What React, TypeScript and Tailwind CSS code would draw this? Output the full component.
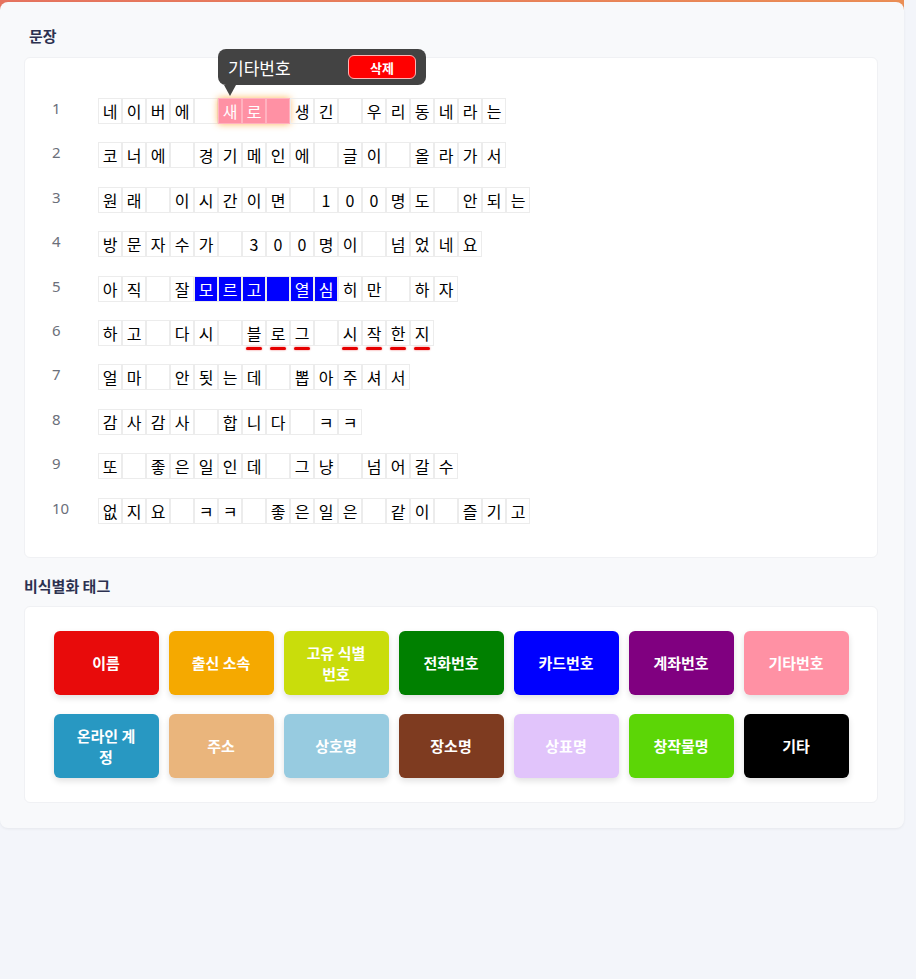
import type { ReactNode } from "react";

const FONT = { fontFamily: '"Noto Sans CJK KR", "Noto Sans", sans-serif' };

const SENTENCES = [
  "네이버에 새로 생긴 우리동네라는",
  "코너에 경기메인에 글이 올라가서",
  "원래 이시간이면 100명도 안되는",
  "방문자수가 300명이 넘었네요",
  "아직 잘모르고 열심히만 하자",
  "하고 다시 블로그 시작한지",
  "얼마 안됫는데 뽑아주셔서",
  "감사감사 합니다 ㅋㅋ",
  "또 좋은일인데 그냥 넘어갈수",
  "없지요 ㅋㅋ 좋은일은 같이 즐기고",
];

// row index -> char indexes with a mark
const BLUE: Record<number, number[]> = { 4: [4, 5, 6, 7, 8, 9] };
const UNDERLINE: Record<number, number[]> = { 5: [6, 7, 8, 10, 11, 12, 13] };

const TAGS: { label: string; bg: string }[] = [
  { label: "이름", bg: "bg-[#e80b0b]" },
  { label: "출신 소속", bg: "bg-[#f5a900]" },
  { label: "고유 식별 번호", bg: "bg-[#c9dd0b]" },
  { label: "전화번호", bg: "bg-[#008000]" },
  { label: "카드번호", bg: "bg-[#0000ff]" },
  { label: "계좌번호", bg: "bg-[#800080]" },
  { label: "기타번호", bg: "bg-[#ff91a4]" },
  { label: "온라인 계정", bg: "bg-[#2898c2]" },
  { label: "주소", bg: "bg-[#eab57c]" },
  { label: "상호명", bg: "bg-[#97cbe0]" },
  { label: "장소명", bg: "bg-[#7e3b20]" },
  { label: "상표명", bg: "bg-[#e1c4fb]" },
  { label: "창작물명", bg: "bg-[#5cd606]" },
  { label: "기타", bg: "bg-black" },
];

function Cell({ ch, className = "", underline = false }: { ch: string; className?: string; underline?: boolean }) {
  return (
    <span
      className={
        "relative flex h-[26px] w-[24px] items-center justify-center border border-[#ececec] text-[16px] leading-none " +
        className
      }
    >
      {ch === " " ? "" : ch}
      {underline && (
        <span className="absolute -bottom-[5px] left-[3px] right-[3px] h-[3px] rounded-full bg-[#e60000] shadow-[0_0_2px_rgba(230,0,0,0.6)]" />
      )}
    </span>
  );
}

function Tooltip() {
  return (
    <div className="absolute bottom-[calc(100%+13px)] left-0 z-10 flex h-[36px] w-[208px] items-center justify-between rounded-lg bg-[#434343] pl-[10px] pr-[10px]">
      <span className="text-[17px] leading-none text-white">기타번호</span>
      <button
        type="button"
        className="flex h-[24px] w-[68px] items-center justify-center rounded-md border border-[#ffb3b3] bg-[#ff0000] text-[13px] font-bold leading-none text-white"
      >
        삭제
      </button>
      <span className="absolute left-[6px] top-full h-0 w-0 border-l-[6px] border-r-[6px] border-t-[11px] border-l-transparent border-r-transparent border-t-[#434343]" />
    </div>
  );
}

function SentenceRow({ text, row }: { text: string; row: number }) {
  const chars = Array.from(text);
  const blue = BLUE[row] ?? [];
  const under = UNDERLINE[row] ?? [];

  let cells: ReactNode;
  if (row === 0) {
    // first row: 새로 + space tagged as 기타번호, tooltip open
    cells = (
      <>
        {chars.slice(0, 5).map((c, i) => (
          <Cell key={i} ch={c} />
        ))}
        <span className="relative flex shadow-[0_0_7px_rgba(255,165,50,0.8)]">
          <Tooltip />
          {chars.slice(5, 8).map((c, i) => (
            <Cell key={i} ch={c} className="border-[#ffb2bf] bg-[#ff91a4] text-white" />
          ))}
        </span>
        {chars.slice(8).map((c, i) => (
          <Cell key={i + 8} ch={c} />
        ))}
      </>
    );
  } else {
    cells = chars.map((c, i) => (
      <Cell
        key={i}
        ch={c}
        underline={under.includes(i)}
        className={blue.includes(i) ? "border-[#0000ff] bg-[#0000ff] text-white" : "text-black"}
      />
    ));
  }

  return (
    <div className="flex items-start">
      <span className="w-[46px] text-[15px] leading-[20px] text-[#6b6f7a]" style={{ fontFamily: '"Noto Sans", sans-serif' }}>
        {row + 1}
      </span>
      <div className="flex">{cells}</div>
    </div>
  );
}

export default function App() {
  return (
    <div className="min-h-[979px] w-full bg-[#f3f5fa]" style={FONT}>
      <div className="w-[904px] bg-[linear-gradient(to_right,#e6735f,#eb8e55)] bg-[length:100%_12px] bg-no-repeat pt-[2px]">
        <div className="rounded-lg bg-[#f8f9fb] pl-6 pr-[26px] pt-6 pb-[25px] shadow-[0_1px_3px_rgba(0,0,0,0.06)]">
          <h2 className="pl-[5px] text-[15px] font-bold leading-[20px] text-[#2c3150]">문장</h2>
          <div className="mt-[11px] flex flex-col gap-[18.4px] rounded-md border border-[#f0f1f4] bg-white pl-[27px] pt-[40px] pb-[33px]">
            {SENTENCES.map((s, i) => (
              <SentenceRow key={i} text={s} row={i} />
            ))}
          </div>

          <h2 className="mt-[18px] text-[15px] font-bold leading-[20px] text-[#2c3150]">비식별화 태그</h2>
          <div className="mt-[10px] flex justify-center rounded-md border border-[#f0f1f4] bg-white py-[24px]">
            <div className="grid grid-cols-7 gap-x-[10px] gap-y-[19px]">
              {TAGS.map((t) => (
                <button
                  key={t.label}
                  type="button"
                  className={
                    "flex h-[64px] w-[105px] items-center justify-center rounded-md px-[18px] text-center text-[15px] font-bold leading-[21px] text-white shadow-[0_3px_6px_rgba(0,0,0,0.12)] " +
                    t.bg
                  }
                >
                  {t.label}
                </button>
              ))}
            </div>
          </div>
        </div>
      </div>
    </div>
  );
}
